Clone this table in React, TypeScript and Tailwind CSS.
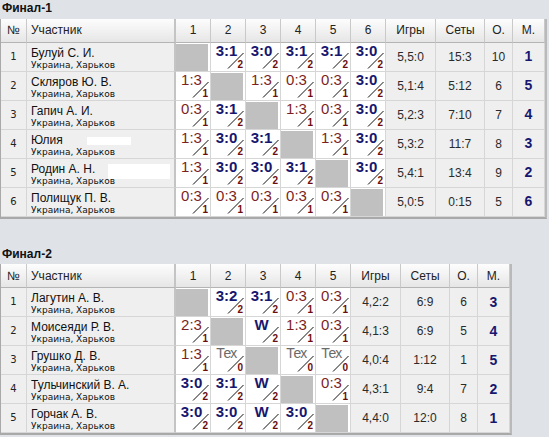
import React from 'react';

type Row = { n: number; name: string; cells: string[]; games: string; sets: string; pts: string; place: string; redact?: 'a' | 'b' };

const t1: Row[] = [
  { n: 1, name: 'Булуй С. И.', cells: ['x', '3:1/2', '3:0/2', '3:1/2', '3:1/2', '3:0/2'], games: '5,5:0', sets: '15:3', pts: '10', place: '1' },
  { n: 2, name: 'Скляров Ю. В.', cells: ['1:3/1', 'x', '1:3/1', '0:3/1', '0:3/1', '3:0/2'], games: '5,1:4', sets: '5:12', pts: '6', place: '5' },
  { n: 3, name: 'Гапич А. И.', cells: ['0:3/1', '3:1/2', 'x', '1:3/1', '0:3/1', '3:0/2'], games: '5,2:3', sets: '7:10', pts: '7', place: '4' },
  { n: 4, name: 'Юлия', cells: ['1:3/1', '3:0/2', '3:1/2', 'x', '1:3/1', '3:0/2'], games: '5,3:2', sets: '11:7', pts: '8', place: '3', redact: 'a' },
  { n: 5, name: 'Родин А. Н.', cells: ['1:3/1', '3:0/2', '3:0/2', '3:1/2', 'x', '3:0/2'], games: '5,4:1', sets: '13:4', pts: '9', place: '2', redact: 'b' },
  { n: 6, name: 'Полищук П. В.', cells: ['0:3/1', '0:3/1', '0:3/1', '0:3/1', '0:3/1', 'x'], games: '5,0:5', sets: '0:15', pts: '5', place: '6' },
];

const t2: Row[] = [
  { n: 1, name: 'Лагутин А. В.', cells: ['x', '3:2/2', '3:1/2', '0:3/1', '0:3/1'], games: '4,2:2', sets: '6:9', pts: '6', place: '3' },
  { n: 2, name: 'Моисеяди Р. В.', cells: ['2:3/1', 'x', 'W/2', '1:3/1', '0:3/1'], games: '4,1:3', sets: '6:9', pts: '5', place: '4' },
  { n: 3, name: 'Грушко Д. В.', cells: ['1:3/1', 'Тех/0', 'x', 'Тех/0', 'Тех/0'], games: '4,0:4', sets: '1:12', pts: '1', place: '5' },
  { n: 4, name: 'Тульчинский В. А.', cells: ['3:0/2', '3:1/2', 'W/2', 'x', '0:3/1'], games: '4,3:1', sets: '9:4', pts: '7', place: '2' },
  { n: 5, name: 'Горчак А. В.', cells: ['3:0/2', '3:0/2', 'W/2', '3:0/2', 'x'], games: '4,4:0', sets: '12:0', pts: '8', place: '1' },
];

const ARIAL = { fontFamily: '"Liberation Sans", Arial, sans-serif' };
const DEJAVU = { fontFamily: '"DejaVu Sans", Verdana, sans-serif' };

function ScoreCell({ v }: { v: string }) {
  if (v === 'x') {
    return (
      <div className="bg-white border-r border-b border-[#d6d6d6] pr-[2px] pt-px">
        <div className="h-full bg-[#c0c0c0]" />
      </div>
    );
  }
  const [s, p] = v.split('/');
  const tex = s === 'Тех';
  const win = p === '2';
  const cls = tex
    ? 'absolute left-0 top-0 w-[31px] text-center text-[14px] leading-[15px] font-normal tracking-[-0.5px] text-[#6a6a6a]'
    : win
    ? 'absolute left-0 top-0 w-[31px] text-center text-[15px] leading-[15px] font-bold text-[#17176f]'
    : 'absolute left-0 top-0 w-[31px] text-center text-[15px] leading-[15px] font-normal text-[#7c1f1f]';
  return (
    <div className="relative bg-white border-r border-b border-[#d6d6d6]" style={ARIAL}>
      <span className={cls}>{s}</span>
      <svg className="absolute left-0 top-0" width="34" height="28">
        <line x1="17" y1="25.5" x2="32.5" y2="10" stroke="#111" strokeWidth="1" />
      </svg>
      <span className="absolute right-[2px] bottom-[1px] text-[10px] font-bold leading-[10px] text-[#6c0d0d]">{p}</span>
    </div>
  );
}

function Table({ rows, cols }: { rows: Row[]; cols: number }) {
  const grid =
    cols === 6
      ? 'grid grid-cols-[26px_149px_35px_35px_35px_35px_35px_35px_50px_49px_28px_32px]'
      : 'grid grid-cols-[26px_149px_35px_35px_35px_35px_35px_50px_49px_28px_32px]';
  const hd =
    'h-[24px] flex items-center justify-center border-r border-b border-r-[#c9c9c9] border-b-[#b4b4b4] bg-linear-to-b from-[#fdfdfd] to-[#e6e6e6] text-[12px] text-[#222]';
  const body = 'flex items-center justify-center border-r border-b border-[#d6d6d6] bg-[#efefef] text-[12px] text-[#2a2a2a]';
  const headers = ['Игры', 'Сеты', 'О.', 'М.'];
  return (
    <div className="inline-block border-l border-r-2 border-b-2 border-l-[#a9a9a9] border-r-[#b9b9b9] border-b-[#a9a9a9]" style={ARIAL}>
      <div className={grid}>
        <div className={hd}>№</div>
        <div className="h-[24px] flex items-center pl-[4px] border-r-2 border-b border-r-[#c4c4c4] border-b-[#b4b4b4] bg-linear-to-b from-[#fdfdfd] to-[#e6e6e6] text-[12px] text-[#222]">
          Участник
        </div>
        {Array.from({ length: cols }, (_, i) => (
          <div key={i} className={hd}>
            {i + 1}
          </div>
        ))}
        {headers.map((h) => (
          <div key={h} className={hd}>
            {h}
          </div>
        ))}
        {rows.map((r) => (
          <React.Fragment key={r.n}>
            <div className="h-[29px] flex justify-center pt-[8px] border-r border-b border-[#d6d6d6] bg-[#efefef] text-[10px] leading-[11px] text-[#222]" style={DEJAVU}>
              {r.n}
            </div>
            <div className="relative h-[29px] pl-[4px] pt-[3px] border-r-2 border-b border-r-[#c4c4c4] border-b-[#d6d6d6] bg-[#efefef]">
              <div className="text-[12px] leading-[14px] text-[#111] whitespace-nowrap">{r.name}</div>
              <div className="text-[9px] leading-[11px] text-[#111] whitespace-nowrap" style={DEJAVU}>
                Украина, Харьков
              </div>
              {r.redact === 'a' && <div className="absolute left-[60px] top-[7px] w-[44px] h-[8px] bg-white" />}
              {r.redact === 'b' && <div className="absolute left-[81px] top-[5px] w-[62px] h-[15px] bg-white" />}
            </div>
            {r.cells.map((c, i) => (
              <ScoreCell key={i} v={c} />
            ))}
            <div className={body}>{r.games}</div>
            <div className={body}>{r.sets}</div>
            <div className={body}>{r.pts}</div>
            <div className="flex items-center justify-center border-r border-b border-[#d6d6d6] bg-[#efefef] text-[14px] font-bold text-[#17176f]">
              {r.place}
            </div>
          </React.Fragment>
        ))}
      </div>
    </div>
  );
}

export default function App() {
  return (
    <div className="w-[549px] h-[437px] bg-[#dfe3e8] overflow-hidden" style={ARIAL}>
      <div className="h-[17px] pl-[2px] text-[12px] font-bold leading-[17px] text-[#111]">Финал-1</div>
      <Table rows={t1} cols={6} />
      <div className="mt-[27px] h-[17px] pl-[2px] text-[12px] font-bold leading-[17px] text-[#111]">Финал-2</div>
      <Table rows={t2} cols={5} />
    </div>
  );
}
